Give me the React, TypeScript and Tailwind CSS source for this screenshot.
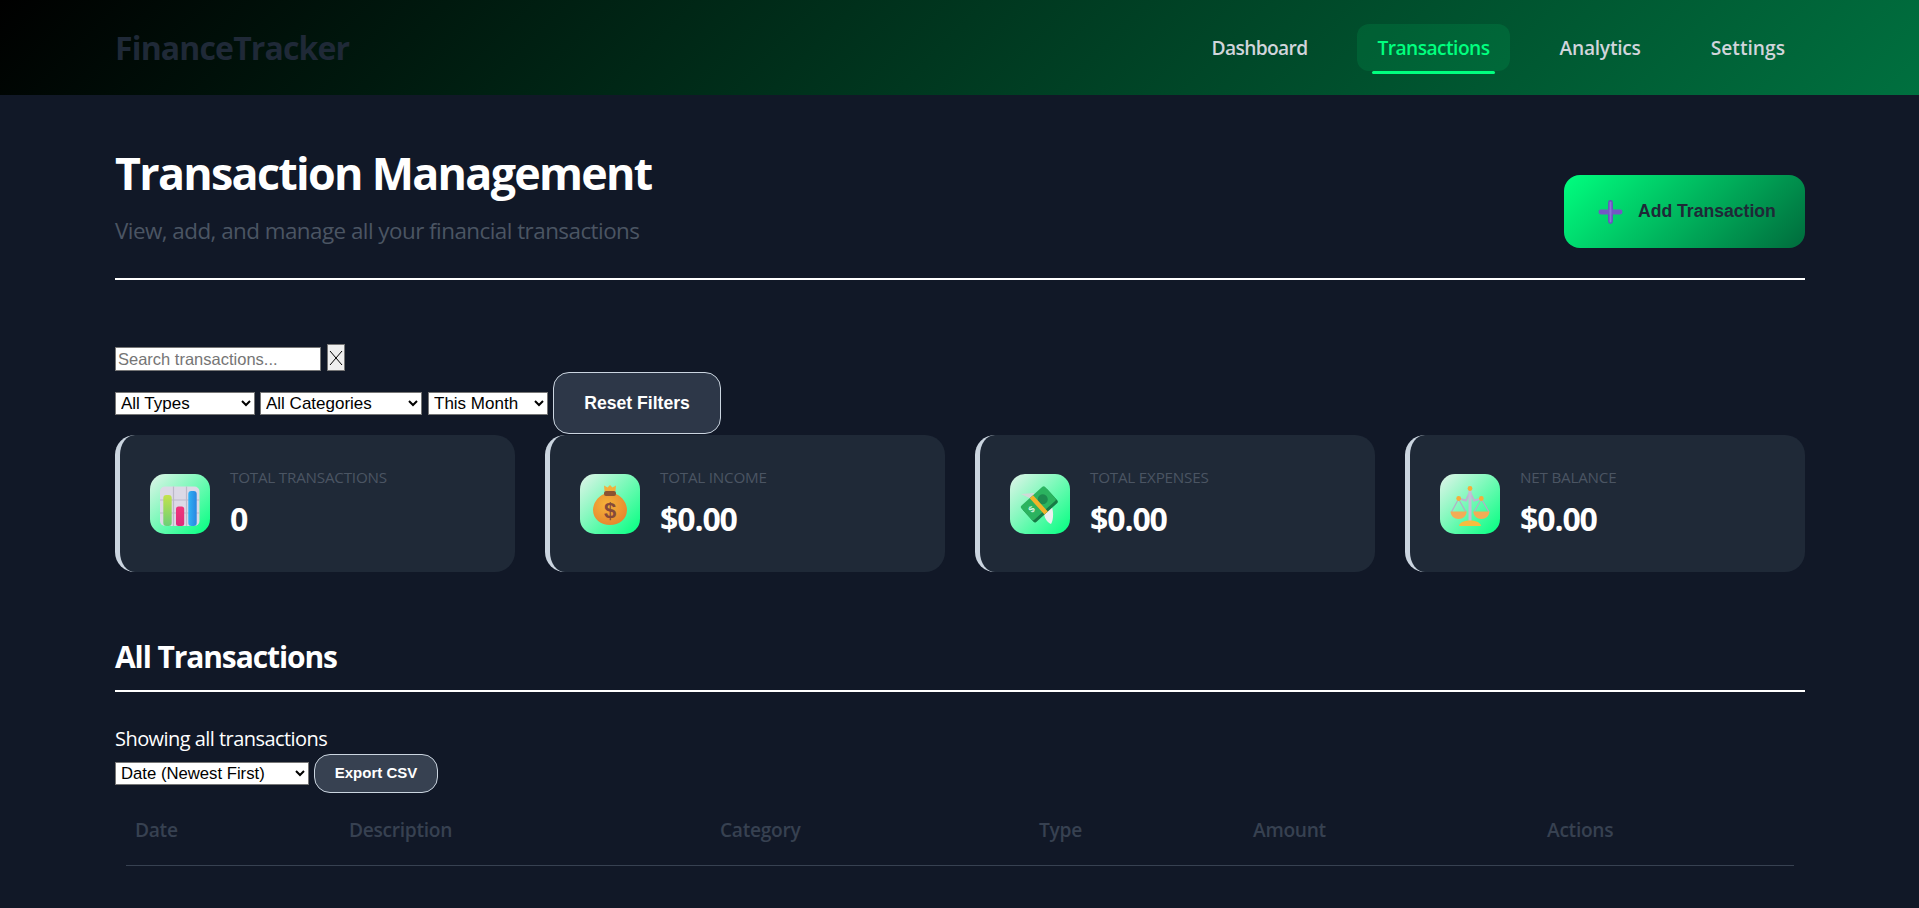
const FONT = "font-['Open_Sans','Noto_Sans',sans-serif]";
const ARIAL = "font-['Liberation_Sans',Arial,sans-serif]";

const ChartIcon = () => (
  <svg viewBox="0 0 60 60" className="w-full h-full">
    <defs>
      <linearGradient id="barGreen" x1="0" y1="0" x2="0" y2="1">
        <stop offset="0" stopColor="#c4e24c" />
        <stop offset="1" stopColor="#6ccf78" />
      </linearGradient>
      <linearGradient id="barPink" x1="0" y1="0" x2="0" y2="1">
        <stop offset="0" stopColor="#f0357a" />
        <stop offset="1" stopColor="#dc2c7c" />
      </linearGradient>
      <linearGradient id="barBlue" x1="0" y1="0" x2="1" y2="0">
        <stop offset="0" stopColor="#2fb2f5" />
        <stop offset="1" stopColor="#2a86e0" />
      </linearGradient>
    </defs>
    <rect x="10" y="12.5" width="39.5" height="39.5" rx="5" fill="#dcd9e6" />
    <path d="M23.5 12.5V52M36.5 12.5V52M10 26H49.5M10 39H49.5" stroke="#bcb9c9" strokeWidth="1.2" />
    <rect x="13.3" y="21" width="8.4" height="31" rx="3" fill="url(#barGreen)" />
    <rect x="26" y="32.5" width="8.2" height="19.5" rx="2.5" fill="url(#barPink)" />
    <rect x="38.3" y="17" width="8.4" height="35" rx="3" fill="url(#barBlue)" />
  </svg>
);

const BagIcon = () => (
  <svg viewBox="0 0 60 60" className="w-full h-full">
    <defs>
      <radialGradient id="bagFill" cx="0.4" cy="0.35" r="0.8">
        <stop offset="0" stopColor="#f6b23a" />
        <stop offset="1" stopColor="#e27f2c" />
      </radialGradient>
    </defs>
    <path d="M24 20C17 23 13 30 13 36C13 45 21 51 30 51C39 51 47 45 47 36C47 30 43 23 36 20Z" fill="url(#bagFill)" />
    <rect x="24" y="17" width="12" height="5" rx="2" fill="#8b5331" />
    <path d="M24.5 17L24 11.5L27.5 13.5L30 11L32.5 13.5L36 11.5L35.5 17Z" fill="#f2b03c" />
    <text x="30" y="44" textAnchor="middle" fontSize="22" fontWeight="700" fill="#85493a" fontFamily="Liberation Sans">$</text>
  </svg>
);

const MoneyIcon = () => (
  <svg viewBox="0 0 60 60" className="w-full h-full">
    <path d="M11 20L24 19L26 27Z" fill="#d3d8d8" />
    <path d="M34 38L42 33C44 40 43 47 41 50C37 48 34 44 34 38Z" fill="#eceeee" />
    <g transform="rotate(-42 29 30)">
      <rect x="13" y="22.5" width="32" height="19" rx="2" fill="#177a45" />
      <rect x="13" y="19.5" width="32" height="19" rx="2" fill="#2bb35f" />
      <circle cx="35" cy="29" r="5" fill="#1d8a4e" />
      <rect x="26" y="19.5" width="4.5" height="22" fill="#f3b32a" />
      <text x="20" y="32" textAnchor="middle" fontSize="9" fontWeight="700" fill="#d8f5e0" fontFamily="Liberation Sans">$</text>
    </g>
  </svg>
);

const ScaleIcon = () => (
  <svg viewBox="0 0 60 60" className="w-full h-full">
    <path d="M18.5 25L11.5 38M18.5 25L26 38M41.5 25L34 38M41.5 25L49 38" stroke="#b4aec6" strokeWidth="1.2" fill="none" />
    <path d="M18.5 24.5L26 26.5L30 18L34 26.5L41.5 24.5" stroke="#bcb5d0" strokeWidth="2" fill="none" />
    <rect x="28.5" y="15" width="3" height="32" fill="#c4bed6" />
    <circle cx="30" cy="14.5" r="2.4" fill="#f6ae3a" />
    <circle cx="18.7" cy="24.5" r="2.4" fill="#f6ae3a" />
    <circle cx="41.3" cy="24.5" r="2.4" fill="#f6ae3a" />
    <path d="M10.5 37.5H26.7C26.5 42 23 45 18.6 45C14.2 45 10.7 42 10.5 37.5Z" fill="#f4ac55" />
    <path d="M33.3 37.5H49.5C49.3 42 45.8 45 41.4 45C37 45 33.5 42 33.3 37.5Z" fill="#f4ac55" />
    <path d="M19 52C19.5 48 25 46.5 30 46.5C35 46.5 40.5 48 41 52Z" fill="#f8bc3e" />
  </svg>
);

const PlusIcon = () => (
  <svg viewBox="0 0 26 26" className="w-[25px] h-[26px] shrink-0">
    <rect x="10.5" y="0.5" width="5" height="25" rx="2.5" fill="#6a4fc0" />
    <rect x="0.5" y="10.5" width="25" height="5" rx="2.5" fill="#7458c4" />
    <rect x="12" y="2" width="2" height="22" rx="1" fill="#8a74d4" />
  </svg>
);

const stats = [
  { label: "Total Transactions", value: "0", icon: <ChartIcon /> },
  { label: "Total Income", value: "$0.00", icon: <BagIcon /> },
  { label: "Total Expenses", value: "$0.00", icon: <MoneyIcon /> },
  { label: "Net Balance", value: "$0.00", icon: <ScaleIcon /> },
];

const navLinks = [
  { name: "Dashboard", tracking: "tracking-[-0.65px]" },
  { name: "Transactions", tracking: "tracking-[-0.55px]" },
  { name: "Analytics", tracking: "tracking-[-0.25px]" },
  { name: "Settings", tracking: "tracking-[0px]" },
];

const columns = [
  { name: "Date", width: "w-[214px]" },
  { name: "Description", width: "w-[371px]" },
  { name: "Category", width: "w-[319px]" },
  { name: "Type", width: "w-[214px]" },
  { name: "Amount", width: "w-[294px]" },
  { name: "Actions", width: "" },
];

const selectClass = `h-[23px] bg-white text-black border border-[#767676] pl-[1px] ${ARIAL}`;

export default function App() {
  return (
    <div className={`min-h-screen bg-[#111827] ${FONT}`}>
      {/* header */}
      <header className="h-[95px] pl-[115px] pr-[114px] flex items-center justify-between bg-[linear-gradient(135deg,#000000_0%,#00703f_100%)]">
        <div className="text-[32px] font-bold tracking-[-0.85px] text-[#1f2937]">FinanceTracker</div>
        <nav className="flex items-center gap-[30px] -mt-[1px]">
          {navLinks.map((link) => {
            const active = link.name === "Transactions";
            return (
              <a
                key={link.name}
                className={`relative h-[47px] px-5 pt-[3px] flex items-center rounded-xl text-[19.2px] font-semibold ${link.tracking} ${
                  active ? "bg-[#00ff7f]/10 text-[#00ff7f]" : "text-[#d1d5db]"
                }`}
              >
                {link.name}
                {active && (
                  <span className="absolute left-[15px] right-[15px] -bottom-[3px] h-[3px] rounded-sm bg-[#00ff7f]" />
                )}
              </a>
            );
          })}
        </nav>
      </header>

      <main className="pl-[115px] pr-[114px]">
        {/* page title */}
        <div className="mt-[50px] pb-[30px] border-b-2 border-white flex items-end justify-between">
          <div className="h-[103px]">
            <h1 className="h-[60px] leading-[56px] text-[44.8px] font-bold tracking-[-1.7px] text-white">
              Transaction Management
            </h1>
            <p className="mt-[11px] h-[30px] leading-[30px] text-[22.4px] tracking-[-0.53px] text-[#4b5563]">
              View, add, and manage all your financial transactions
            </p>
          </div>
          <button className={`w-[241px] h-[73px] pl-[34px] flex items-center gap-[15px] rounded-2xl text-[17.6px] font-bold text-[#1f2937] bg-[linear-gradient(135deg,#00ff7f_0%,#006b3c_100%)] ${ARIAL}`}>
            <PlusIcon />
            Add Transaction
          </button>
        </div>

        {/* filters */}
        <div className="mt-[64px] flex items-center gap-[6px] h-[27px]">
          <input
            placeholder="Search transactions..."
            className={`w-[206px] h-[24px] mt-[3px] px-[2px] bg-white text-black text-[16.5px] border border-[#767676] placeholder:text-[#757575] ${ARIAL}`}
          />
          <button className="w-[18px] h-[27px] flex items-center justify-center bg-[#efefef] border border-[#767676] text-black">
            <svg viewBox="0 0 14 18" className="w-[14px] h-[18px]">
              <path d="M1 2L13 16M13 2L1 16" stroke="#000" strokeWidth="1" fill="none" />
            </svg>
          </button>
        </div>
        <div className="mt-[1px] flex items-center gap-[5px]">
          <select className={`w-[140px] text-[17px] ${selectClass}`}>
            <option>All Types</option>
          </select>
          <select className={`w-[162px] text-[17px] ${selectClass}`}>
            <option>All Categories</option>
          </select>
          <select className={`w-[120px] ml-[1px] text-[17px] ${selectClass}`}>
            <option>This Month</option>
          </select>
          <button className={`w-[168px] h-[62px] rounded-2xl border border-[#cbd5e0] bg-[#2d3748] text-white text-[17.6px] font-bold ${ARIAL}`}>
            Reset Filters
          </button>
        </div>

        {/* stat cards */}
        <div className="mt-[1px] grid grid-cols-4 gap-[30px]">
          {stats.map((stat) => (
            <div
              key={stat.label}
              className="h-[137px] pl-[30px] flex items-center gap-5 rounded-[20px] border-l-[5px] border-[#cbd5e0] bg-[#1f2937]"
            >
              <div className="w-[60px] h-[60px] shrink-0 rounded-[15px] overflow-hidden bg-[linear-gradient(135deg,#e2f4ea_0%,#00ff7f_100%)]">
                {stat.icon}
              </div>
              <div>
                <div className="h-[20px] leading-[18px] text-[15.2px] uppercase tracking-[-0.2px] text-[#4b5563]">{stat.label}</div>
                <div className="mt-[11px] h-[40px] leading-[40px] text-[32px] font-bold tracking-[-1.1px] text-white">{stat.value}</div>
              </div>
            </div>
          ))}
        </div>

        {/* transactions */}
        <h2 className="mt-[65px] pb-[13px] border-b-2 border-white h-[55px] leading-[40px] text-[30px] font-bold tracking-[-1.1px] text-white">
          All Transactions
        </h2>
        <div className="mt-[35px] h-[24px] leading-[24px] text-[20px] tracking-[-0.55px] text-white">Showing all transactions</div>
        <div className="mt-[3px] flex items-center gap-[5px]">
          <select className={`w-[194px] text-[16.7px] ${selectClass}`}>
            <option>Date (Newest First)</option>
          </select>
          <button className={`w-[124px] h-[39px] rounded-2xl border border-[#cbd5e0] bg-[#374151] text-white text-[15px] font-bold ${ARIAL}`}>
            Export CSV
          </button>
        </div>
        <div className="mt-[2px] px-[11px] pb-[40px]">
          <table className="w-full table-fixed border-collapse">
            <thead>
              <tr className="h-[70px] border-b border-[#374151]">
                {columns.map((col) => (
                  <th
                    key={col.name}
                    className={`${col.width} px-[9px] pt-[2px] text-left text-[19.2px] font-semibold tracking-[-0.3px] text-[#374151]`}
                  >
                    {col.name}
                  </th>
                ))}
              </tr>
            </thead>
          </table>
        </div>
      </main>
    </div>
  );
}
